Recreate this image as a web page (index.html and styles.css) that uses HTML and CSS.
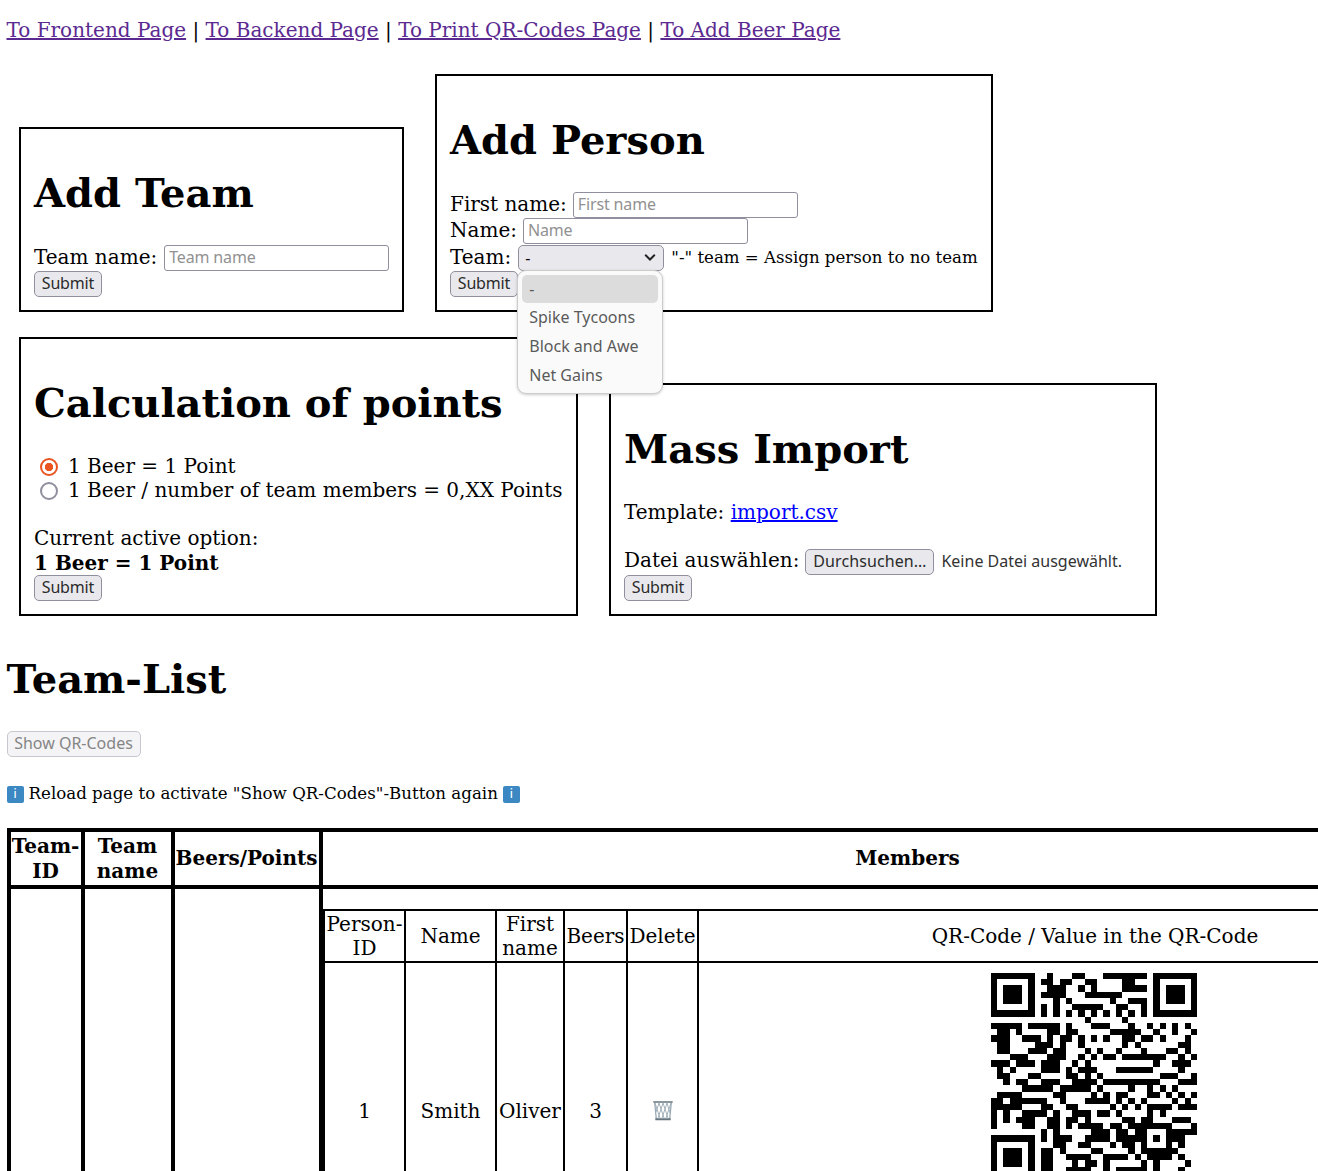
FILE: index.html
```html
<!DOCTYPE html>
<html lang="en">
<head>
<meta charset="utf-8">
<title>Backend</title>
<link rel="stylesheet" href="styles.css">
</head>
<body>
<nav class="nav"><a href="#">To Frontend Page</a> | <a href="#">To Backend Page</a> | <a href="#">To Print QR-Codes Page</a> | <a href="#">To Add Beer Page</a></nav>

<div class="forms forms-top">
  <form class="box box-team">
    <h1>Add Team</h1>
    <div class="row"><label>Team name:</label><input class="field" placeholder="Team name"></div>
    <div class="row"><button type="button" class="btn submit">Submit</button></div>
  </form>
  <form class="box box-person">
    <h1>Add Person</h1>
    <div class="row"><label>First name:</label><input class="field" placeholder="First name"></div>
    <div class="row"><label>Name:</label><input class="field" placeholder="Name"></div>
    <div class="row"><label>Team:</label>
      <div class="select"><span>-</span>
        <svg class="chevron" viewBox="0 0 10 7"><path d="M1 1.2 5 5.2 9 1.2"/></svg>
        <ul class="menu"><li class="active">-</li><li>Spike Tycoons</li><li>Block and Awe</li><li>Net Gains</li></ul>
      </div>
      <small class="hint">"-" team = Assign person to no team</small>
    </div>
    <div class="row"><button type="button" class="btn submit">Submit</button></div>
  </form>
</div>

<div class="forms forms-bottom">
  <form class="box box-points">
    <h1>Calculation of points</h1>
    <div class="line"><i class="radio checked"></i>1 Beer = 1 Point</div>
    <div class="line"><i class="radio"></i>1 Beer / number of team members = 0,XX Points</div>
    <div class="line current">Current active option:</div>
    <div class="line active-option"><b>1 Beer = 1 Point</b></div>
    <div class="row"><button type="button" class="btn submit">Submit</button></div>
  </form>
  <form class="box box-import">
    <h1>Mass Import</h1>
    <div class="line template">Template:&nbsp;<a href="#" class="file-link">import.csv</a></div>
    <div class="row"><label>Datei auswählen:</label><button type="button" class="btn browse">Durchsuchen…</button><span class="no-file">Keine Datei ausgewählt.</span></div>
    <div class="row"><button type="button" class="btn submit">Submit</button></div>
  </form>
</div>

<h1 class="list-title">Team-List</h1>
<button type="button" class="btn show" disabled>Show QR-Codes</button>
<div class="info"><span class="badge">i</span><span>Reload page to activate "Show QR-Codes"-Button again</span><span class="badge">i</span></div>

<table class="teams">
  <colgroup><col class="t1"><col class="t2"><col class="t3"><col class="t4"></colgroup>
  <tr class="head"><th>Team-ID</th><th>Team name</th><th>Beers/Points</th><th>Members</th></tr>
  <tr>
    <td></td><td></td><td></td>
    <td class="members">
      <table class="people">
        <colgroup><col class="p1"><col class="p2"><col class="p3"><col class="p4"><col class="p5"><col class="p6"></colgroup>
        <tr class="head"><td>Person-ID</td><td>Name</td><td>First name</td><td>Beers</td><td>Delete</td><td>QR-Code / Value in the QR-Code</td></tr>
        <tr class="person"><td>1</td><td>Smith</td><td>Oliver</td><td>3</td>
          <td><svg class="trash" viewBox="0 0 20 21"><path class="mesh" d="M2 3 7 18M6 3l5 15M10 3l5 15M14 3l3 10M18 3l-5 15M14 3 9 18M10 3 5 18M6 3 3 12"/><path class="side" d="M1.7 2.5 3.3 19M18.3 2.5 16.7 19"/><path class="rim" d="M.3 1.2h19.4v1.6H.3zM2.3 18.3h15.4v2H2.3z"/></svg></td>
          <td class="code"><svg class="qr" id="qr" viewBox="0 0 33 33"></svg></td></tr>
      </table>
    </td>
  </tr>
</table>
<script src="qr.js"></script>
</body>
</html>
```
FILE: qr.js
```js
// Dark runs of each row, as "column" or "first-last".
const rows = [
  "9 13-14 18-24",
  "8-9 11-12 15-16 21-22",
  "9-11 14 16 21-24",
  "8-11 15-20",
  "10 12 19 22-24",
  "8 10 13-17 20-21 24",
  "8 10 12 14 16 18 20 22 24",
  "15 21",
  "0-4 6-10 12 16-18 22 25 27 29 31",
  "1-2 4 9-10 12-13 19-23 26 29 32",
  "0-2 5-7 9 11-12 14 16 18 21-22 24-25 27 31",
  "1-2 7-9 11 14 21 23 30-31",
  "1-2 6-8 10-11 15 17 20 24 28-29 31",
  "3-5 9-11 14 16 18-19 21-27 30 32",
  "0-2 4-6 8-10 13 15 26 29-31",
  "1 3 8-10 12 14-16 20-25 30",
  "1-2 6-7 12-13 15 17 27-29 32",
  "2 4-5 8-10 13-16 18-26 30-32",
  "5-9 11-15 17 22 25 27 29",
  "1-4 10-11 16 18 20-21 25-26 28 30 32",
  "0-1 3-8 11 15-18 20 22 24 29 31",
  "0-4 8-9 12-13 19 21 23 25-28 30-32",
  "0 2 5-8 10 13-15 17-18 20 25 27",
  "0 2 4-6 9-10 12-13 15 21-22 24-25 29-31",
  "0 5-6 9-10 12 14-17 19-20 22-28 32",
  "8 10 16-18 20-21 23-24 28-32",
  "8 10-12 15-18 20-24 26 28-30",
  "10-11 14-15 19 21-22 24 28 30",
  "8-9 11 16-17 22 24-29",
  "8-9 12-15 18-21 23 25-28 30",
  "8-9 13 15-16 18 24 26 31",
  "8-9 12-15 18 20-24 26 30",
  "8 11-13 16 19-21 25 28-29 31"
];
let d = "";
rows.forEach((row, y) => row.split(" ").forEach(run => {
  const [a, b = a] = run.split("-").map(Number);
  d += `M${a} ${y}h${b - a + 1}v1h-${b - a + 1}z`;
}));
// Finder patterns in three corners.
for (const [x, y] of [[0, 0], [26, 0], [0, 26]]) {
  d += `M${x} ${y}h7v7h-7zm1 1v5h5v-5zm1 1h3v3h-3z`;
}
document.getElementById("qr").innerHTML = `<path d="${d}"/>`;
```
FILE: styles.css
```css
* { box-sizing: border-box; }
html { overflow: hidden; }
body {
  margin: 0; padding: 18px 0 0 6.5px; width: 1318px; height: 1171px; overflow: hidden;
  background: #fff; color: #000; font: 20px/24px "DejaVu Serif", serif; white-space: nowrap;
}
h1 { margin: 27px 0 28px; font-size: 40px; line-height: 48px; font-weight: bold; }
.nav { height: 24px; color: #000; }
.nav a { color: #5b2a90; }
.forms { display: flex; align-items: flex-end; gap: 31px; padding-left: 12.5px; }
.forms-top { margin-top: 32px; }
.forms-bottom { margin-top: 25px; }
.box { border: 2px solid #000; padding: 13px; }
.box-team { width: 385px; }
.box-person { width: 558px; }
.box-points { width: 559px; }
.box-import { width: 548px; }
.row { display: flex; align-items: center; height: 26px; }
.box-person .row { height: 26.25px; }
.row label { margin-right: 6px; line-height: 24px; position: relative; top: -1px; }
.box-team label { margin-right: 7px; }
.box-import label { top: -2px; }
.line { display: flex; align-items: center; height: 24px; padding-bottom: 2px; }
.current { margin-top: 24px; padding-bottom: 3px; }
.active-option { padding-bottom: 1px; }
.template { margin-bottom: 24px; }
.file-link { color: #00f; }
.field, .btn, .select, .no-file { font: 16px/20px "Noto Sans", sans-serif; letter-spacing: -.15px; }
.field { width: 225px; height: 26px; padding: 0 4px 2px; border: 1px solid #8f8f9d; border-radius: 3px; background: #fff; }
.field::placeholder { color: #919191; opacity: 1; }
.btn { height: 26px; padding: 0 0 2px; border: 1px solid #8f8f9d; border-radius: 5px; background: #e9e9ed; color: #2b2b2b; text-align: center; }
.submit { width: 68px; }
.browse { width: 129px; letter-spacing: .1px; }
.no-file { margin-left: 7px; padding-bottom: 2px; color: #333; letter-spacing: 0; }
.select {
  position: relative; display: flex; align-items: center; justify-content: space-between;
  width: 146px; height: 26px; margin-left: 1px; padding: 0 7px 0 6px; border: 1px solid #8f8f9d; border-radius: 5px; background: #e9e9ed;
}
.chevron { width: 12px; height: 9px; fill: none; stroke: #222; stroke-width: 1.6; }
.menu {
  position: absolute; z-index: 2; left: -2px; top: 24px; width: 146px; height: 124px; margin: 0; padding: 4px;
  list-style: none; border: 1px solid #ccc; border-radius: 9px; background: #fafafa; color: #5a5a5a;
  letter-spacing: 0; box-shadow: 0 1px 3px rgba(0, 0, 0, .2);
}
.menu li { height: 28.8px; padding-left: 7px; line-height: 28px; border-radius: 5px; }
.menu .active { background: #dcdcdc; }
.hint { margin-left: 7px; font-size: 16.6px; }
.radio { width: 18px; height: 18px; margin: 2px 10px 0 6px; border: 2.5px solid #8f8f9d; border-radius: 50%; background: #fff; }
.radio.checked { border-color: #e95420; background: radial-gradient(circle, #e95420 0 3.8px, #fff 4.5px); }
.list-title { margin: 39px 0 28px; }
.show { display: block; width: 134px; border-color: #c7c7ce; background: #f4f4f6; color: #858585; letter-spacing: 0; }
.info { display: flex; align-items: center; gap: 5px; height: 24px; margin: 25px 0 22px; font-size: 16.65px; }
.badge { width: 17px; height: 17px; border-radius: 2px; background: #3b88c3; color: #fff; font: 13px/16px "DejaVu Sans", sans-serif; text-align: center; }
table { border-collapse: collapse; table-layout: fixed; white-space: normal; text-align: center; }
.teams { width: 1490px; border: 4px solid #000; }
.teams > tbody > tr > th, .teams > tbody > tr > td { padding: 1px 0; border: 4px solid #000; }
.teams > tbody > .head { height: 57px; }
.head th { line-height: 25px; }
.t1 { width: 74px; }
.t2 { width: 90px; }
.t3 { width: 148px; }
.t4 { width: 1174px; }
.teams > tbody > tr > .members { padding: 20px 0 20px .5px; vertical-align: top; }
.people { width: 1169px; }
.people td { padding: 0 0 1px; border: 2px solid #000; }
.people .head { height: 52px; }
.person { height: 298px; }
.p1 { width: 81px; }
.p2 { width: 91px; }
.p3 { width: 68px; }
.p4 { width: 63px; }
.p5 { width: 71px; }
.p6 { width: 794px; }
.people .code { padding-top: 10px; vertical-align: top; }
.qr { display: block; width: 206px; height: 206px; margin: 0 auto; shape-rendering: crispEdges; position: relative; left: -1px; }
.trash { display: block; width: 20px; height: 21px; margin: 0 auto; fill: none; stroke: #9aaab4; }
.trash .mesh { stroke-width: .9; }
.trash .side { stroke-width: 1.3; }
.trash .rim { fill: #66757f; stroke: none; }
```
